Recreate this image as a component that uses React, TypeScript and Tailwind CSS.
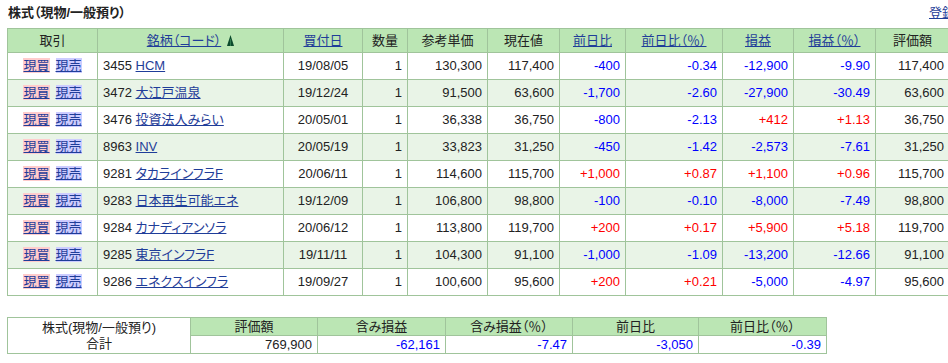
const rows: string[][] = [
  ["3455", "HCM", "19/08/05", "1", "130,300", "117,400", "-400", "-0.34", "-12,900", "-9.90", "117,400"],
  ["3472", "大江戸温泉", "19/12/24", "1", "91,500", "63,600", "-1,700", "-2.60", "-27,900", "-30.49", "63,600"],
  ["3476", "投資法人みらい", "20/05/01", "1", "36,338", "36,750", "-800", "-2.13", "+412", "+1.13", "36,750"],
  ["8963", "INV", "20/05/19", "1", "33,823", "31,250", "-450", "-1.42", "-2,573", "-7.61", "31,250"],
  ["9281", "タカラインフラF", "20/06/11", "1", "114,600", "115,700", "+1,000", "+0.87", "+1,100", "+0.96", "115,700"],
  ["9283", "日本再生可能エネ", "19/12/09", "1", "106,800", "98,800", "-100", "-0.10", "-8,000", "-7.49", "98,800"],
  ["9284", "カナディアンソラ", "20/06/12", "1", "113,800", "119,700", "+200", "+0.17", "+5,900", "+5.18", "119,700"],
  ["9285", "東京インフラF", "19/11/11", "1", "104,300", "91,100", "-1,000", "-1.09", "-13,200", "-12.66", "91,100"],
  ["9286", "エネクスインフラ", "19/09/27", "1", "100,600", "95,600", "+200", "+0.21", "-5,000", "-4.97", "95,600"],
];

const headers: { label: string; link?: boolean; sort?: boolean }[] = [
  { label: "取引" },
  { label: "銘柄（コード）", link: true, sort: true },
  { label: "買付日", link: true },
  { label: "数量" },
  { label: "参考単価" },
  { label: "現在値" },
  { label: "前日比", link: true },
  { label: "前日比（％）", link: true },
  { label: "損益", link: true },
  { label: "損益（％）", link: true },
  { label: "評価額" },
];

function signColor(v: string) {
  if (v.startsWith("+")) return "text-[#ff0000]";
  if (v.startsWith("-")) return "text-[#0000ff]";
  return "text-[#222]";
}

function SortIcon() {
  return (
    <svg width="7" height="11" viewBox="0 0 7 11" className="inline-block ml-[6px] align-[-1px]">
      <polygon points="3.5,0 7,11 0,11" fill="#0b4a2c" />
      <rect x="3" y="4" width="1" height="7" fill="#2f7a4f" />
    </svg>
  );
}

export default function App() {
  const cell = "border border-[#a0c49b] px-[5px]";
  return (
    <div className="w-[948px] h-[363px] overflow-hidden bg-white text-[13px] text-[#222] [font-family:'Liberation_Sans','Noto_Sans_CJK_JP',sans-serif] [font-feature-settings:'palt']">
      <div className="w-[990px] pl-[7px]">
        <div className="w-[942px] h-[28px] flex justify-between items-start pt-[3px]">
          <span className="font-bold text-[13px] leading-[20px] pl-[1px]">株式（現物/一般預り）</span>
          <a className="text-[#1f3d99] underline leading-[20px] -mr-[32px]">登録銘柄</a>
        </div>

        <table className="table-fixed border-collapse w-[942px]">
          <colgroup>
            <col className="w-[90px]" />
            <col className="w-[186px]" />
            <col className="w-[79px]" />
            <col className="w-[45px]" />
            <col className="w-[80px]" />
            <col className="w-[72px]" />
            <col className="w-[66px]" />
            <col className="w-[97px]" />
            <col className="w-[71px]" />
            <col className="w-[82px]" />
            <col className="w-[74px]" />
          </colgroup>
          <thead>
            <tr className="bg-[#bbe6b4]">
              {headers.map((h) => (
                <th key={h.label} className={`${cell} h-[24px] font-normal text-center whitespace-nowrap`}>
                  {h.link ? <a className="text-[#1f3d99] underline">{h.label}</a> : h.label}
                  {h.sort && <SortIcon />}
                </th>
              ))}
            </tr>
          </thead>
          <tbody>
            {rows.map((r, i) => (
              <tr key={r[0]} className={i % 2 === 0 ? "bg-white" : "bg-[#e9f4e7]"}>
                <td className={`${cell} h-[27px] text-center whitespace-nowrap`}>
                  <a className="underline text-[#1f3d99] bg-[#ffcccc]">現買</a>
                  <a className="underline text-[#1f3d99] bg-[#ccccff] ml-[6px]">現売</a>
                </td>
                <td className={`${cell} whitespace-nowrap`}>
                  {r[0]} <a className="underline text-[#1f3d99]">{r[1]}</a>
                </td>
                <td className={`${cell} text-center`}>{r[2]}</td>
                <td className={`${cell} text-right`}>{r[3]}</td>
                <td className={`${cell} text-right`}>{r[4]}</td>
                <td className={`${cell} text-right`}>{r[5]}</td>
                <td className={`${cell} text-right ${signColor(r[6])}`}>{r[6]}</td>
                <td className={`${cell} text-right ${signColor(r[7])}`}>{r[7]}</td>
                <td className={`${cell} text-right ${signColor(r[8])}`}>{r[8]}</td>
                <td className={`${cell} text-right ${signColor(r[9])}`}>{r[9]}</td>
                <td className={`${cell} text-right`}>{r[10]}</td>
              </tr>
            ))}
          </tbody>
        </table>

        <table className="table-fixed border-collapse w-[819px] mt-[21px] leading-[16px]">
          <colgroup>
            <col className="w-[183px]" />
            <col className="w-[127px]" />
            <col className="w-[128px]" />
            <col className="w-[127px]" />
            <col className="w-[126px]" />
            <col className="w-[128px]" />
          </colgroup>
          <tbody>
            <tr>
              <td rowSpan={2} className={`${cell} text-center bg-white`}>
                株式(現物/一般預り)
                <br />
                合計
              </td>
              <td className={`${cell} h-[18px] bg-[#bbe6b4] text-center`}>評価額</td>
              <td className={`${cell} bg-[#bbe6b4] text-center`}>含み損益</td>
              <td className={`${cell} bg-[#bbe6b4] text-center`}>含み損益（％）</td>
              <td className={`${cell} bg-[#bbe6b4] text-center`}>前日比</td>
              <td className={`${cell} bg-[#bbe6b4] text-center`}>前日比（％）</td>
            </tr>
            <tr>
              <td className={`${cell} h-[18px] text-right`}>769,900</td>
              <td className={`${cell} text-right text-[#0000ff]`}>-62,161</td>
              <td className={`${cell} text-right text-[#0000ff]`}>-7.47</td>
              <td className={`${cell} text-right text-[#0000ff]`}>-3,050</td>
              <td className={`${cell} text-right text-[#0000ff]`}>-0.39</td>
            </tr>
          </tbody>
        </table>
      </div>
    </div>
  );
}
